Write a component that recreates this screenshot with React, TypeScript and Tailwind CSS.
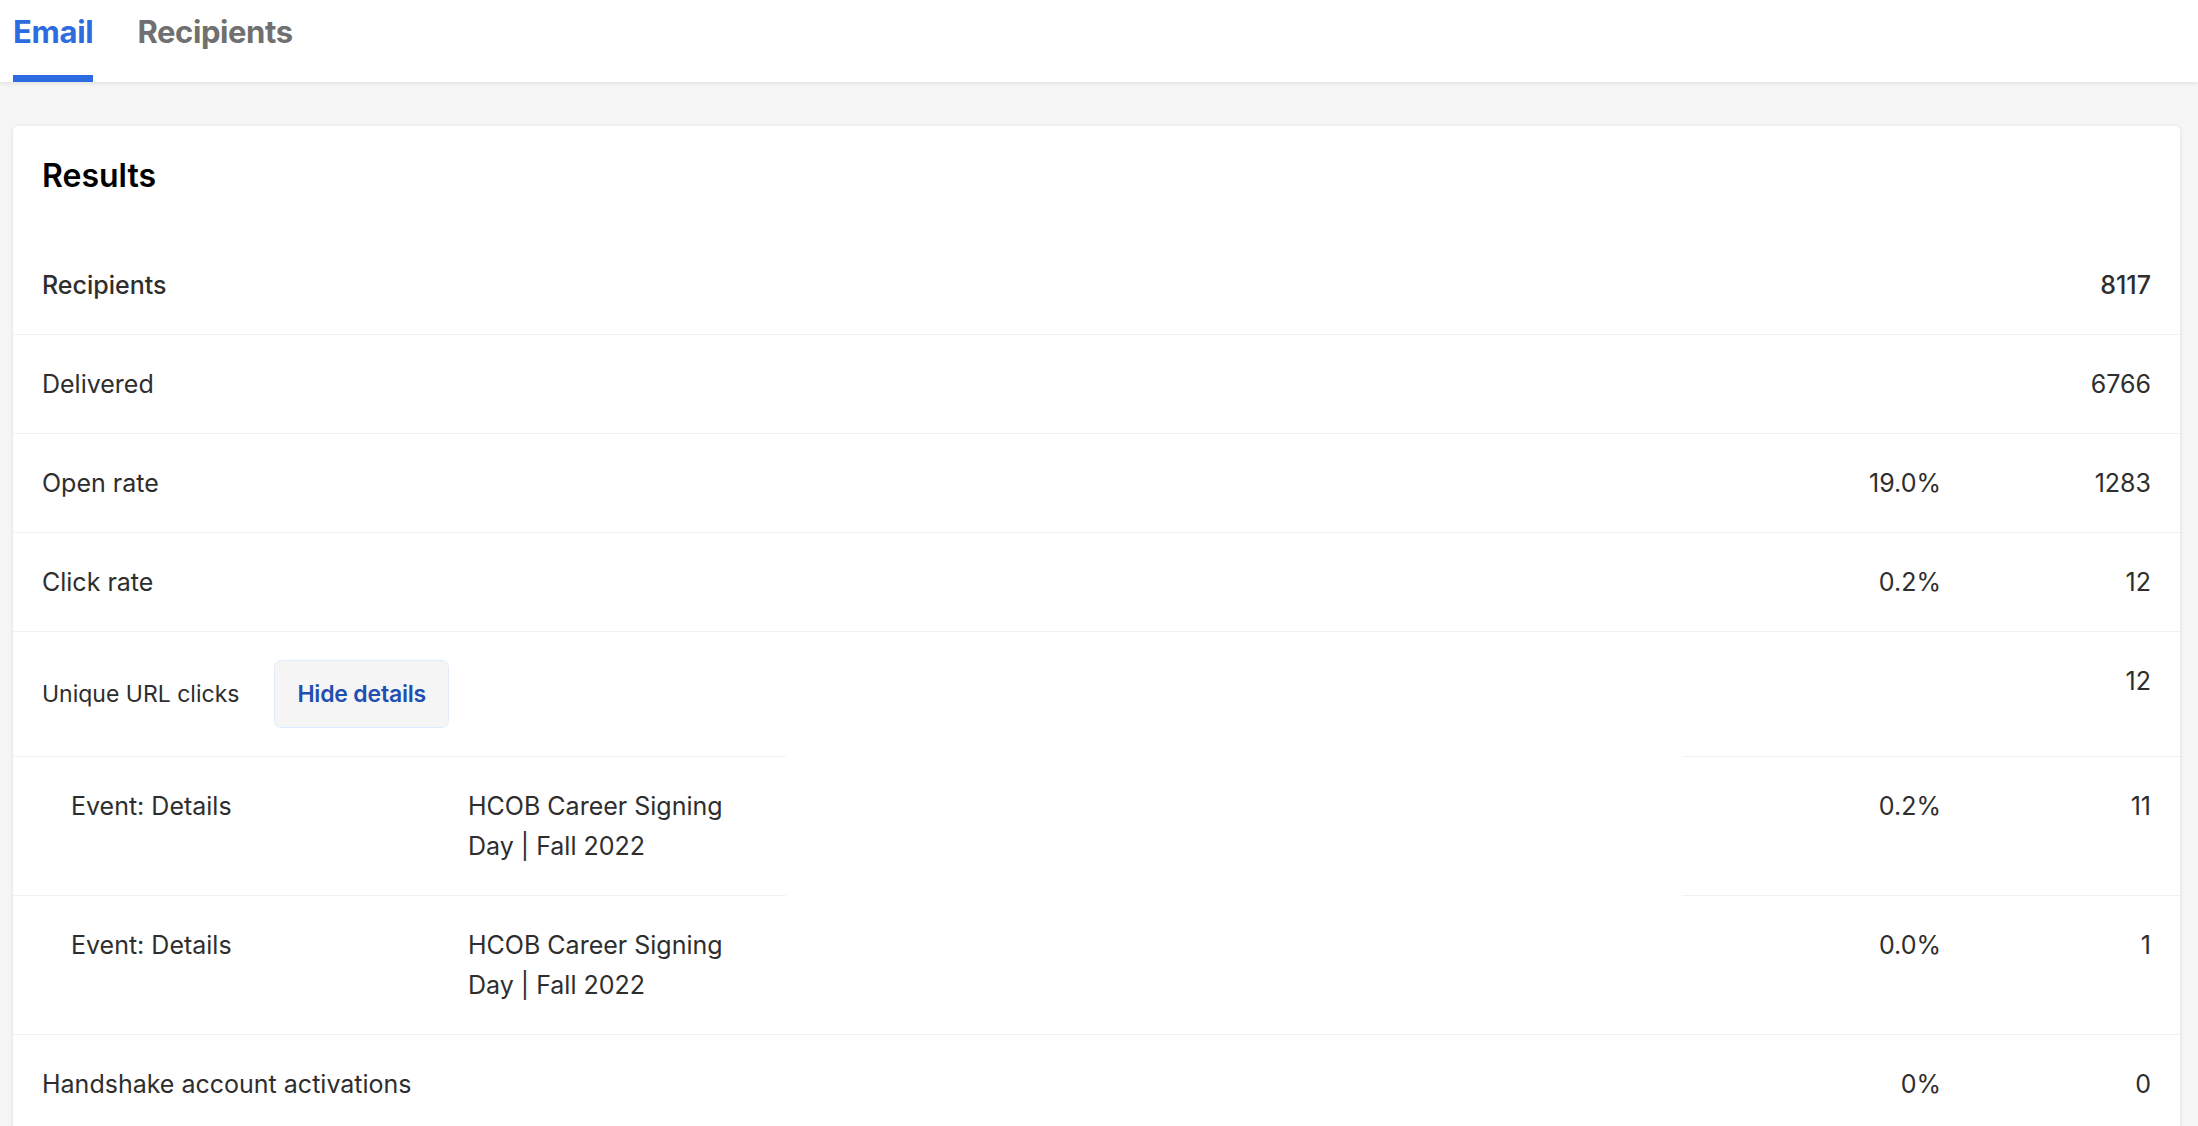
import React from 'react';

type Stat = {
  label: string;
  pct?: string;
  count: string;
};

const stats: Stat[] = [
  { label: 'Delivered', count: '6766' },
  { label: 'Open rate', pct: '19.0%', count: '1283' },
  { label: 'Click rate', pct: '0.2%', count: '12' },
];

const urlClicks = [
  { name: 'HCOB Career Signing Day | Fall 2022', pct: '0.2%', count: '11' },
  { name: 'HCOB Career Signing Day | Fall 2022', pct: '0.0%', count: '1' },
];

const cols = 'grid grid-cols-[427px_346px_1fr_288px_210px]';

function Tabs() {
  return (
    <header className="relative z-10 flex h-[82px] gap-[44px] bg-white px-[13px] shadow-[0_2px_4px_rgba(0,0,0,0.08)]">
      <a href="#" className="block h-full border-b-[7px] border-[#2d6be0] pt-[13px] text-[31px] leading-[38px] font-bold tracking-[-0.3px] text-[#2d6be0]">
        Email
      </a>
      <a href="#" className="block h-full pt-[13px] text-[31px] leading-[38px] font-bold tracking-[-0.4px] text-[#707070]">
        Recipients
      </a>
    </header>
  );
}

function StatRow({ label, pct, count }: Stat) {
  return (
    <div className={`${cols} border-t border-[#f1f1f1]`}>
      <div className="col-span-3 pl-[29px] py-[29px]">{label}</div>
      <div className="py-[29px] pr-[29px] text-right">{pct}</div>
      <div className="py-[29px] pr-[29px] text-right">{count}</div>
    </div>
  );
}

export default function App() {
  return (
    <div className="min-h-screen bg-[#f6f6f6] font-['Inter',sans-serif] text-[25px] leading-[40px] text-[#2e2e2e]">
      <Tabs />
      <main className="pl-[13px] pr-[18px] pt-[44px]">
        <section className="rounded-[5px] bg-white pt-[29px] shadow-[0_1px_4px_rgba(0,0,0,0.12)]">
          <h2 className="mb-[39px] px-[29px] text-[32px] leading-[42px] font-semibold text-black">Results</h2>

          <div className={`${cols} font-medium`}>
            <div className="col-span-3 pl-[29px] py-[29px]">Recipients</div>
            <div className="py-[29px]" />
            <div className="py-[29px] pr-[29px] text-right">8117</div>
          </div>

          {stats.map((s) => (
            <StatRow key={s.label} {...s} />
          ))}

          <div className={`${cols} border-t border-[#f1f1f1]`}>
            <div className="col-span-3 flex items-center gap-[35px] py-[28px] pl-[29px] text-[23px]">
              <span>Unique URL clicks</span>
              <button className="h-[68px] rounded-[8px] border border-dotted border-[#cfe0f6] bg-[#f5f5f6] px-[22px] text-[23px] font-semibold tracking-[-0.2px] text-[#1f4fb0]">
                Hide details
              </button>
            </div>
            <div className="py-[29px]" />
            <div className="py-[29px] pr-[29px] text-right">12</div>
          </div>

          {urlClicks.map((u, i) => (
            <div key={i} className={cols}>
              <div className="border-t border-[#f1f1f1] py-[29px] pl-[58px]">Event: Details</div>
              <div className="border-t border-[#f1f1f1] py-[29px] pl-[28px] pr-[28px]">{u.name}</div>
              <div className="border-t border-white" />
              <div className="border-t border-[#f1f1f1] py-[29px] pr-[29px] text-right">{u.pct}</div>
              <div className="border-t border-[#f1f1f1] py-[29px] pr-[29px] text-right">{u.count}</div>
            </div>
          ))}

          <StatRow label="Handshake account activations" pct="0%" count="0" />
        </section>
      </main>
    </div>
  );
}
